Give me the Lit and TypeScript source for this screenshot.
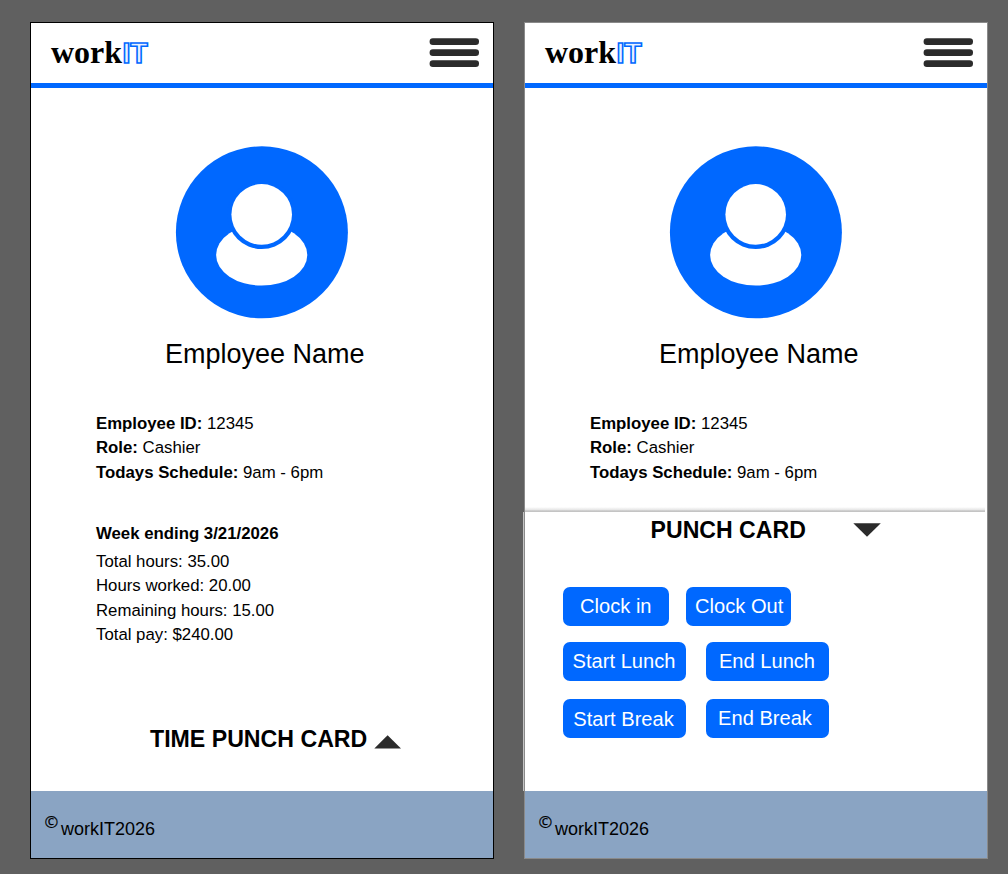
import { LitElement, html, css } from "lit";
import { customElement, property } from "lit/decorators.js";

@customElement("phone-header")
class PhoneHeader extends LitElement {
  static styles = css`
    :host {
      display: flex;
      justify-content: space-between;
      height: 60.3px;
      border-bottom: 5px solid #0068ff;
      padding: 0 14px 0 20px;
      flex: none;
      box-sizing: content-box;
    }
    .bar {
      display: flex;
      justify-content: space-between;
      width: 100%;
    }
    .logo {
      display: flex;
      align-items: baseline;
      font: bold 32px/36px "Liberation Serif", serif;
      color: #000;
      padding-top: 11px;
    }
    .it {
      font: bold 28.6px/36px "Liberation Sans", sans-serif;
      color: #eaf2ff;
      -webkit-text-stroke: 1.6px #0068ff;
      margin-left: 0.3px;
    }
    .menu {
      width: 50px;
      height: 30px;
      margin-top: 15px;
    }
  `;
  render() {
    return html`
      <div class="bar">
        <div class="logo"><span>work</span><span class="it">IT</span></div>
        <svg class="menu" viewBox="0 0 50 30" fill="#2b2b2b">
          <rect x="0.6" y="0.3" width="49.4" height="6.7" rx="3.3" />
          <rect x="0.6" y="11.3" width="49.4" height="6.7" rx="3.3" />
          <rect x="0.6" y="22.3" width="49.4" height="6.7" rx="3.3" />
        </svg>
      </div>
    `;
  }
}

@customElement("employee-profile")
class EmployeeProfile extends LitElement {
  static styles = css`
    :host {
      display: flex;
      flex-direction: column;
      font: 16.8px/24.5px "Liberation Sans", Arial, sans-serif;
      color: #000;
      flex: none;
    }
    .avatar {
      width: 174px;
      height: 174px;
      margin: 56.9px 0 0 144px;
    }
    .name {
      margin: 17.8px 0 0 134px;
      font-size: 27px;
      line-height: 34px;
      white-space: nowrap;
    }
    .facts {
      margin: 41px 0 0 65px;
      white-space: nowrap;
    }
  `;
  render() {
    return html`
      <svg class="avatar" viewBox="0 0 174 174">
        <circle cx="86.9" cy="87.3" r="86" fill="#0068ff" />
        <ellipse cx="86.7" cy="110" rx="45.6" ry="30.6" fill="#fff" />
        <circle cx="86.7" cy="69.6" r="34.4" fill="#0068ff" />
        <circle cx="86.7" cy="69.4" r="30.3" fill="#fff" />
      </svg>
      <div class="name">Employee Name</div>
      <div class="facts">
        <div><b>Employee ID:</b> 12345</div>
        <div><b>Role:</b> Cashier</div>
        <div><b>Todays Schedule:</b> 9am - 6pm</div>
      </div>
    `;
  }
}

@customElement("phone-footer")
class PhoneFooter extends LitElement {
  static styles = css`
    :host {
      display: flex;
      align-items: flex-start;
      height: 66.6px;
      flex: none;
      background: #8aa4c3;
      color: #000;
      font: 18px/22px "Liberation Sans", Arial, sans-serif;
    }
    .mark {
      font-family: "Open Sans", sans-serif;
      font-size: 16.6px;
      margin: 20px 0 0 13.4px;
      -webkit-text-stroke: 0.2px #000;
    }
    .owner {
      margin: 26.4px 0 0 2.8px;
    }
  `;
  render() {
    return html`<span class="mark">©</span><span class="owner">workIT2026</span>`;
  }
}

@customElement("punch-panel")
class PunchPanel extends LitElement {
  static styles = css`
    :host {
      display: flex;
      flex-direction: column;
      font-family: "Liberation Sans", Arial, sans-serif;
    }
    .edge {
      height: 5px;
      flex: none;
      margin-right: 2px;
      background: linear-gradient(#fff, #e9e9e9 50%, #bdbdbd 85%, #d2d2d2);
    }
    .body {
      flex: 1;
      margin-left: -2px;
      padding-left: 1px;
      border-left: 1px solid #c4c4c4;
      background: #fff;
      box-shadow: inset 1px 0 #8a8a8a;
    }
    .head {
      display: flex;
      align-items: flex-start;
      padding-left: 125.6px;
    }
    .title {
      font-size: 23.1px;
      font-weight: bold;
      line-height: 28px;
      margin-top: 4px;
      white-space: nowrap;
    }
    .arrow {
      width: 28px;
      height: 14px;
      margin: 11px 0 0 47.2px;
    }
    .grid {
      display: flex;
      flex-direction: column;
      padding: 43px 0 0 38px;
    }
    .row {
      display: flex;
      gap: 20px;
      margin-bottom: 16px;
    }
    .row.clock {
      gap: 17.3px;
    }
    .row.lunch {
      margin-bottom: 17.5px;
    }
    button {
      font: 20.1px/38px "Liberation Sans", Arial, sans-serif;
      width: 123px;
      height: 39px;
      padding: 0 1px 1px 0;
      border: 0;
      border-radius: 7px;
      background: #0068ff;
      color: #fff;
      white-space: nowrap;
    }
    .clock button {
      width: 105.6px;
      padding: 0 0 1px;
    }
    .clock button + button {
      padding-left: 1px;
    }
    button.low {
      padding: 1px 2px 0 0;
    }
    button.shift {
      padding-right: 5px;
    }
  `;
  render() {
    return html`
      <div class="edge"></div>
      <div class="body">
        <div class="head">
          <span class="title">PUNCH CARD</span>
          <svg class="arrow" viewBox="0 0 28 14"><path d="M0.3 0.2H27.8L14 13.8Z" fill="#2b2b2b" /></svg>
        </div>
        <div class="grid">
          <div class="row clock"><button>Clock in</button><button>Clock Out</button></div>
          <div class="row lunch"><button>Start Lunch</button><button>End Lunch</button></div>
          <div class="row"><button class="low">Start Break</button><button class="shift">End Break</button></div>
        </div>
      </div>
    `;
  }
}

@customElement("phone-screen")
class PhoneScreen extends LitElement {
  @property({ type: Boolean }) open = false;

  static styles = css`
    :host {
      display: flex;
      flex-direction: column;
      box-sizing: border-box;
      width: 464px;
      height: 837px;
      border: 1px solid #000;
      background: #fff;
      font: 16.8px/24.5px "Liberation Sans", Arial, sans-serif;
      color: #000;
    }
    :host([open]) {
      border-color: #8a8a8a;
    }
    .week {
      margin: 36.5px 0 0 65px;
      white-space: nowrap;
    }
    .week-title {
      font-weight: bold;
      margin-bottom: 3.5px;
    }
    .toggle {
      display: flex;
      align-items: flex-start;
      margin: 77px 0 0 119px;
      font-size: 23.15px;
      font-weight: bold;
      line-height: 28px;
      white-space: nowrap;
    }
    .arrow {
      width: 28px;
      height: 14px;
      margin: 10px 0 0 6.3px;
    }
    .panel {
      margin-top: 21.7px;
      flex: 1;
    }
    .foot {
      margin-top: auto;
    }
  `;
  render() {
    return html`
      <phone-header></phone-header>
      <employee-profile></employee-profile>
      ${this.open
        ? html`<punch-panel class="panel"></punch-panel>`
        : html`
            <div class="week">
              <div class="week-title">Week ending 3/21/2026</div>
              <div>Total hours: 35.00</div>
              <div>Hours worked: 20.00</div>
              <div>Remaining hours: 15.00</div>
              <div>Total pay: $240.00</div>
            </div>
            <div class="toggle">
              <span>TIME PUNCH CARD</span>
              <svg class="arrow" viewBox="0 0 28 14"><path d="M0.3 13.5H27L13.6 0.2Z" fill="#2b2b2b" /></svg>
            </div>
          `}
      <phone-footer class="foot"></phone-footer>
    `;
  }
}

@customElement("app-root")
class AppRoot extends LitElement {
  static styles = css`
    :host {
      display: flex;
      gap: 30px;
      box-sizing: border-box;
      width: 1008px;
      height: 874px;
      padding: 22px 0 0 30px;
      background: #606060;
      overflow: hidden;
    }
  `;
  render() {
    return html`<phone-screen></phone-screen><phone-screen open></phone-screen>`;
  }
}
